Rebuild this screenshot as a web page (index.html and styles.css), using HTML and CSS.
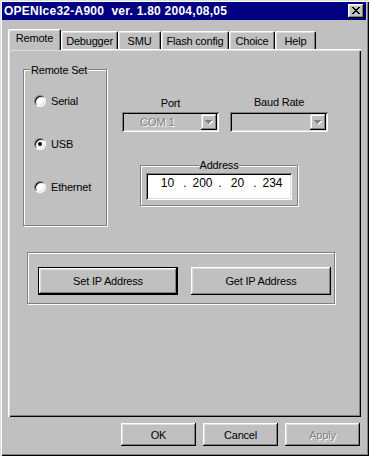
FILE: index.html
```html
<!DOCTYPE html>
<html>
<head>
<meta charset="utf-8">
<title>OPENIce32-A900</title>
<link rel="stylesheet" href="styles.css">
</head>
<body>
<div class="window">
  <div class="titlebar">
    <span class="title">OPENIce32-A900&nbsp; ver. 1.80 2004,08,05</span>
    <button class="caption-btn" aria-label="Close">
      <svg width="8" height="7" viewBox="0 0 8 7" shape-rendering="crispEdges">
        <path fill="#000" d="M0 0h2v1H0zM6 0h2v1H6zM1 1h2v1H1zM5 1h2v1H5zM2 2h4v1H2zM3 3h2v1H3zM2 4h4v1H2zM1 5h2v1H1zM5 5h2v1H5zM0 6h2v1H0zM6 6h2v1H6z"/>
      </svg>
    </button>
  </div>

  <div class="tabs">
    <div class="tab active t-remote">Remote</div>
    <div class="tab t-debugger">Debugger</div>
    <div class="tab t-smu">SMU</div>
    <div class="tab t-flash">Flash config</div>
    <div class="tab t-choice">Choice</div>
    <div class="tab t-help">Help</div>
  </div>

  <div class="panel">
    <div class="top-row">
      <div class="group remote-set">
        <div class="group-label">Remote Set</div>
        <div class="radios">
          <div class="radio"><span class="circle"></span><span>Serial</span></div>
          <div class="radio"><span class="circle checked"></span><span>USB</span></div>
          <div class="radio"><span class="circle"></span><span>Ethernet</span></div>
        </div>
      </div>

      <div class="right-col">
        <div class="combos">
          <div class="field port">
            <div class="field-label">Port</div>
            <div class="combo">
              <span class="combo-text disabled">COM 1</span>
              <span class="combo-btn">
                <svg width="8" height="5" viewBox="0 0 8 5" shape-rendering="crispEdges">
                  <path fill="#fff" d="M1 1h7v1H1zM2 2h5v1H2zM3 3h3v1H3zM4 4h1v1H4z"/>
                  <path fill="#808080" d="M0 0h7v1H0zM1 1h5v1H1zM2 2h3v1H2zM3 3h1v1H3z"/>
                </svg>
              </span>
            </div>
          </div>
          <div class="field baud">
            <div class="field-label">Baud Rate</div>
            <div class="combo">
              <span class="combo-text disabled"></span>
              <span class="combo-btn">
                <svg width="8" height="5" viewBox="0 0 8 5" shape-rendering="crispEdges">
                  <path fill="#fff" d="M1 1h7v1H1zM2 2h5v1H2zM3 3h3v1H3zM4 4h1v1H4z"/>
                  <path fill="#808080" d="M0 0h7v1H0zM1 1h5v1H1zM2 2h3v1H2zM3 3h1v1H3z"/>
                </svg>
              </span>
            </div>
          </div>
        </div>

        <div class="group address">
          <div class="group-label centered">Address</div>
          <div class="ip-edit">
            <span class="octet">10</span><span class="dot">.</span>
            <span class="octet">200</span><span class="dot">.</span>
            <span class="octet">20</span><span class="dot">.</span>
            <span class="octet">234</span>
          </div>
        </div>
      </div>
    </div>

    <div class="group ip-group">
      <button class="btn ip-btn default">Set IP Address</button>
      <button class="btn ip-btn">Get IP Address</button>
    </div>
  </div>

  <div class="dialog-buttons">
    <button class="btn dlg-btn">OK</button>
    <button class="btn dlg-btn">Cancel</button>
    <button class="btn dlg-btn disabled">Apply</button>
  </div>
</div>
</body>
</html>
```

FILE: styles.css
```css
* { box-sizing: border-box; }

html, body {
  margin: 0;
  padding: 0;
  background: #c0c0c0;
  overflow: hidden;
}

body {
  font-family: "Liberation Sans", Arial, sans-serif;
  font-size: 11px;
  line-height: 13px;
  color: #000;
  letter-spacing: -0.2px;
}

.window {
  width: 369px;
  height: 456px;
  padding: 2px 3px 2px 2px;
  background: #c0c0c0;
  box-shadow: inset 1px 1px #dfdfdf, inset 2px 2px #fff,
              inset -1px -1px #000, inset -2px -2px #808080;
}

/* ---------- title bar ---------- */
.titlebar {
  height: 18px;
  background: #000080;
  display: flex;
  align-items: center;
  padding: 0 2px 0 2px;
}

.title {
  color: #fff;
  font-weight: bold;
  font-size: 12px;
  letter-spacing: 0.25px;
  white-space: pre;
}

.caption-btn {
  margin-left: auto;
  width: 16px;
  height: 14px;
  padding: 0;
  border: 0;
  background: #c0c0c0;
  display: flex;
  align-items: center;
  justify-content: center;
  box-shadow: inset -1px -1px #000, inset 1px 1px #fff,
              inset -2px -2px #808080, inset 2px 2px #dfdfdf;
}
.caption-btn svg { display: block; margin-top: -1px; }

/* ---------- tabs ---------- */
.tabs {
  display: flex;
  align-items: flex-end;
  margin: 9px 0 0 6px;
  height: 20px;
}

.tab {
  height: 18px;
  padding-top: 3px;
  text-align: center;
  background: #c0c0c0;
  border-top: 1px solid #fff;
  border-left: 1px solid #fff;
  border-right: 1px solid #000;
  border-radius: 2px 2px 0 0;
  box-shadow: inset -1px 0 #808080, inset 1px 1px #dfdfdf;
  white-space: nowrap;
}

.tab.active {
  height: 21px;
  margin-bottom: -1px;
  padding-top: 2px;
  position: relative;
  z-index: 1;
}

.t-remote { width: 53px; }
.t-debugger { width: 57px; }
.t-smu { width: 43px; }
.t-flash { width: 68px; }
.t-choice { width: 46px; }
.t-help { width: 41px; }

/* ---------- panel ---------- */
.panel {
  margin-left: 6px;
  width: 353px;
  height: 368px;
  padding: 20px 0 0 15px;
  box-shadow: inset 1px 1px #fff, inset 2px 2px #dfdfdf,
              inset -1px -1px #000, inset -2px -2px #808080;
}

.top-row {
  display: flex;
  align-items: flex-start;
}

/* etched group box */
.group {
  border: 1px solid #808080;
  box-shadow: inset 1px 1px #fff, 1px 1px #fff;
}

.group-label {
  width: fit-content;
  background: #c0c0c0;
  padding: 0 1px;
  line-height: 13px;
  white-space: nowrap;
}

.remote-set {
  width: 84px;
  height: 157px;
}
.remote-set .group-label {
  margin: -6px 0 0 6px;
}

.radios {
  display: flex;
  flex-direction: column;
  gap: 31px;
  margin-top: 18px;
  padding-left: 10px;
}

.radio {
  display: flex;
  align-items: center;
  gap: 5px;
  height: 12px;
  line-height: 12px;
}

.circle {
  width: 12px;
  height: 12px;
  flex: none;
  border-radius: 50%;
  background: #fff;
  border: 1px solid;
  border-color: #808080 #fff #fff #808080;
  box-shadow: inset 1px 1px #000, inset -1px -1px #dfdfdf;
  display: flex;
  align-items: center;
  justify-content: center;
}
.circle.checked::after {
  content: "";
  width: 4px;
  height: 4px;
  border-radius: 50%;
  background: #000;
}

/* right column */
.right-col {
  margin: 27px 0 0 15px;
}

.combos {
  display: flex;
  align-items: flex-end;
}

.field {
  display: flex;
  flex-direction: column;
}
.port { width: 97px; }
.baud { width: 98px; margin-left: 11px; }

.field-label {
  text-align: center;
  line-height: 13px;
}
.port .field-label { margin-bottom: 2px; }
.baud .field-label { margin-bottom: 3px; }

.combo {
  height: 20px;
  display: flex;
  align-items: center;
  background: #c0c0c0;
  padding: 2px;
  box-shadow: inset 1px 1px #808080, inset -1px -1px #fff,
              inset 2px 2px #000, inset -2px -2px #dfdfdf;
}

.combo-text {
  flex: 1;
  padding-left: 16px;
  font-size: 11px;
  letter-spacing: 0;
}

.disabled {
  color: #808080;
  text-shadow: 1px 1px 0 #fff;
}

.combo-btn {
  width: 16px;
  height: 16px;
  flex: none;
  display: flex;
  align-items: center;
  justify-content: center;
  background: #c0c0c0;
  box-shadow: inset -1px -1px #000, inset 1px 1px #dfdfdf,
              inset -2px -2px #808080, inset 2px 2px #fff;
}
.combo-btn svg { display: block; }

.address {
  width: 158px;
  height: 41px;
  margin: 33px 0 0 18px;
}
.group-label.centered {
  margin: -7px auto 0;
}

.ip-edit {
  margin: 1px 0 0 5px;
  width: 146px;
  height: 27px;
  background: #fff;
  padding: 3px 0 0 9px;
  display: flex;
  align-items: flex-start;
  font-size: 12px;
  line-height: 14px;
  letter-spacing: 0;
  box-shadow: inset 1px 1px #808080, inset -1px -1px #fff,
              inset 2px 2px #000, inset -2px -2px #dfdfdf;
}
.octet { width: 25px; text-align: center; }
.dot { width: 10px; text-align: center; }

/* IP buttons group */
.ip-group {
  width: 308px;
  height: 52px;
  margin: 26px 0 0 4px;
  padding: 14px 0 0 10px;
  display: flex;
  align-items: flex-start;
  gap: 13px;
}

/* ---------- buttons ---------- */
.btn {
  font-family: "Liberation Sans", Arial, sans-serif;
  font-size: 11px;
  letter-spacing: -0.2px;
  color: #000;
  background: #c0c0c0;
  border: 0;
  padding: 0;
  box-shadow: inset -1px -1px #000, inset 1px 1px #fff,
              inset -2px -2px #808080, inset 2px 2px #dfdfdf;
}

.ip-btn {
  width: 140px;
  height: 28px;
}
.ip-btn.default {
  border: 1px solid #000;
}

.dialog-buttons {
  display: flex;
  justify-content: flex-end;
  gap: 7px;
  margin-top: 6px;
  padding-right: 6px;
}

.dlg-btn {
  width: 75px;
  height: 23px;
  font-size: 11px;
}
.dlg-btn.disabled {
  color: #808080;
  text-shadow: 1px 1px 0 #fff;
}
```
